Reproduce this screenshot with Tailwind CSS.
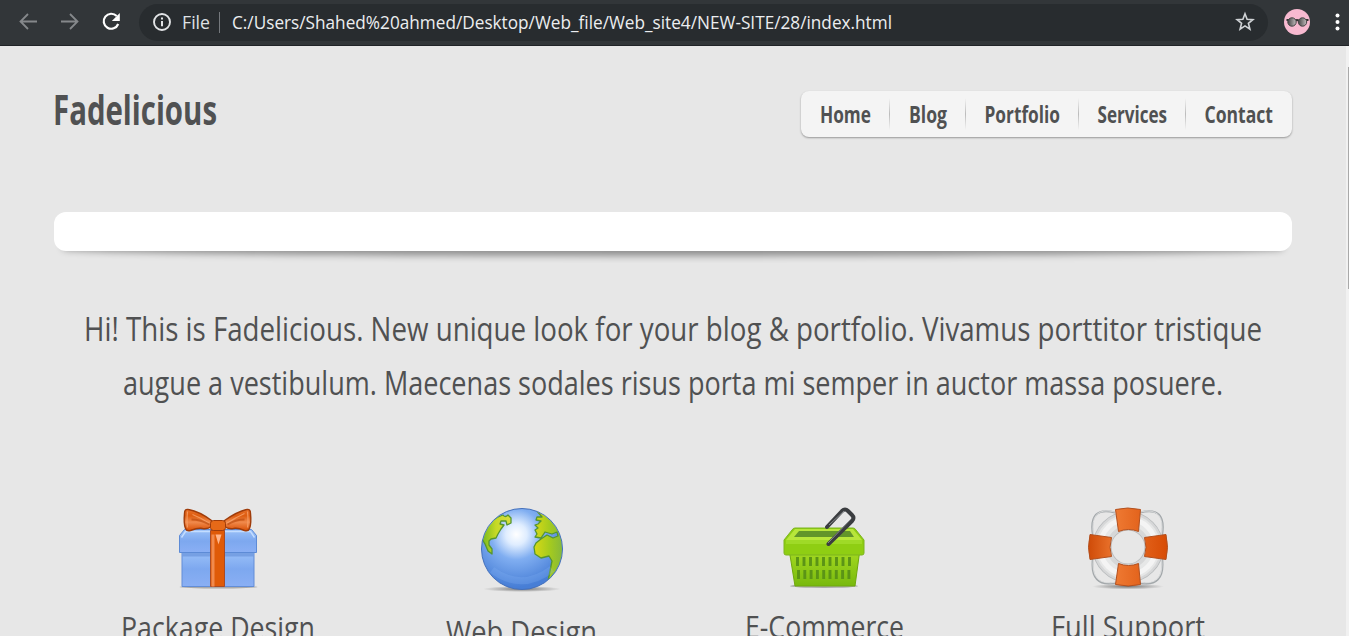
<!DOCTYPE html>
<html lang="en">
<head>
<meta charset="utf-8">
<title>Fadelicious</title>
<script src="https://cdn.jsdelivr.net/npm/@tailwindcss/browser@4"></script>
</head>
<body class="h-[636px] w-[1349px] overflow-hidden bg-[#e7e7e7] font-['Open_Sans',sans-serif] text-[#505152]">
<header class="flex h-[46px] items-center border-b border-[#202327] bg-[#323639] pb-px">
  <svg class="ml-[18px] mr-[21px] size-5 shrink-0" viewBox="0 0 20 20" fill="none" stroke="#85888b" stroke-width="1.8"><path d="M19 9.5H3M10 2L2.5 9.5 10 17"/></svg>
  <svg class="mr-[21px] size-5 shrink-0" viewBox="0 0 20 20" fill="none" stroke="#85888b" stroke-width="1.8"><path d="M2 9.5h16M11 2l7.5 7.5L11 17"/></svg>
  <svg class="mr-[17px] size-[22px] shrink-0" viewBox="0 0 22 22"><path d="M16.7 5.100A7.5 7.5 0 1 0 18.2 13" fill="none" stroke="#fff" stroke-width="2.2"/><path d="M19.8 2v8h-8z" fill="#fff"/></svg>
  <div class="flex h-[37px] w-[1129px] shrink-0 items-center rounded-full bg-[#282c2f]">
    <svg class="ml-[13px] mr-2.5 size-5 shrink-0" viewBox="0 0 20 20"><circle cx="10" cy="10" r="8" fill="none" stroke="#e2e4e6" stroke-width="1.9"/><path d="M10 9v5.3M10 5.5v2" stroke="#e2e4e6" stroke-width="2"/></svg>
    <svg class="h-8 w-[31px] shrink-0 overflow-visible" aria-label="File"><text x="0" y="23" font-size="18" fill="#dfe1e4" textLength="28" lengthAdjust="spacingAndGlyphs">File</text></svg>
    <i class="ml-[6px] mr-3 h-[21px] w-px bg-[#74787c]"></i>
    <svg class="h-8 w-[670px] shrink-0 overflow-visible"><text x="0" y="23" font-size="18" fill="#eceef0" textLength="660" lengthAdjust="spacingAndGlyphs">C:/Users/Shahed%20ahmed/Desktop/Web_file/Web_site4/NEW-SITE/28/index.html</text></svg>
    <svg class="ml-auto mr-3 size-[22px] shrink-0" viewBox="0 0 22 22"><path d="M11 2.8l2.1 5.4 5.800.4-4.5 3.7 1.5 5.8-4.9-3.2-4.9 3.2 1.5-5.8L3.1 8.6l5.800-.4z" fill="none" stroke="#d0d3d6" stroke-width="1.6"/></svg>
  </div>
  <svg class="ml-4 size-[26px] shrink-0" viewBox="0 0 26 26"><defs><linearGradient id="lens"><stop stop-color="#444"/><stop offset="1" stop-color="#c3bdbf"/></linearGradient></defs><circle cx="13" cy="13" r="13" fill="#f7b9d0"/><path d="M2.5 11h3M20.5 11h4M11 12q2-2 4 0" stroke="#333" stroke-width="1.8" fill="none"/><circle cx="8" cy="13" r="4.2" fill="url(#lens)" stroke="#444"/><circle cx="18.5" cy="13" r="4.2" fill="url(#lens)" stroke="#444"/></svg>
  <svg class="ml-[23px] h-5 w-2 shrink-0" viewBox="0 0 8 20" fill="#fff"><circle cx="4.5" cy="3.5" r="2"/><circle cx="4.5" cy="10" r="2"/><circle cx="4.5" cy="16.5" r="2"/></svg>
</header>
<div class="flex h-[590px]">
  <main class="w-[1346px] shrink-0 overflow-hidden">
    <div class="flex h-[166px] items-start justify-between pl-[54px] pr-[54px] pt-[45px]">
      <h1 class="h-11"><svg class="h-11 w-[170px] overflow-visible"><text x="-1" y="34" font-size="41" font-weight="700" fill="#505152" textLength="164" lengthAdjust="spacingAndGlyphs">Fadelicious</text></svg></h1>
      <nav class="flex h-[46px] w-[491px] items-center rounded-lg bg-[#f4f4f4] shadow-[0_1px_2px_rgba(0,0,0,0.35)]">
        <a class="w-[88px]"><svg class="h-[46px] w-full overflow-visible"><text x="19" y="31.500" font-size="23.500" font-weight="700" fill="#505152" textLength="51" lengthAdjust="spacingAndGlyphs">Home</text></svg></a>
        <i class="h-8 w-px bg-linear-to-b from-transparent via-[#bbb] to-transparent"></i>
        <a class="w-[75px]"><svg class="h-[46px] w-full overflow-visible"><text x="19" y="31.500" font-size="23.500" font-weight="700" fill="#505152" textLength="38" lengthAdjust="spacingAndGlyphs">Blog</text></svg></a>
        <i class="h-8 w-px bg-linear-to-b from-transparent via-[#bbb] to-transparent"></i>
        <a class="w-[112px]"><svg class="h-[46px] w-full overflow-visible"><text x="18.500" y="31.500" font-size="23.500" font-weight="700" fill="#505152" textLength="75.500" lengthAdjust="spacingAndGlyphs">Portfolio</text></svg></a>
        <i class="h-8 w-px bg-linear-to-b from-transparent via-[#bbb] to-transparent"></i>
        <a class="w-[106px]"><svg class="h-[46px] w-full overflow-visible"><text x="18.500" y="31.500" font-size="23.500" font-weight="700" fill="#505152" textLength="69.500" lengthAdjust="spacingAndGlyphs">Services</text></svg></a>
        <i class="h-8 w-px bg-linear-to-b from-transparent via-[#bbb] to-transparent"></i>
        <a class="w-[106px]"><svg class="h-[46px] w-full overflow-visible"><text x="18.500" y="31.500" font-size="23.500" font-weight="700" fill="#505152" textLength="68.500" lengthAdjust="spacingAndGlyphs">Contact</text></svg></a>
      </nav>
    </div>
    <section class="ml-[54px] grid h-[51px] w-[1238px] content-start overflow-hidden">
      <div class="z-10 col-start-1 row-start-1 h-[39px] rounded-xl bg-white"></div>
      <div class="col-start-1 row-start-1 mx-2.5 mt-5 h-[19px] rounded-[50%/6px] shadow-[0_4px_7px_1px_rgba(0,0,0,0.38)]"></div>
    </section>
    <section class="h-[233px] pt-[39px]">
      <svg class="h-[54px] w-full overflow-visible"><text x="84" y="39" font-size="33" font-weight="450" fill="#505152" textLength="1178" lengthAdjust="spacingAndGlyphs">Hi! This is Fadelicious. New unique look for your blog &amp; portfolio. Vivamus porttitor tristique</text></svg>
      <svg class="h-[54px] w-full overflow-visible"><text x="123" y="39" font-size="33" font-weight="450" fill="#505152" textLength="1100" lengthAdjust="spacingAndGlyphs">augue a vestibulum. Maecenas sodales risus porta mi semper in auctor massa posuere.</text></svg>
    </section>
    <section class="grid grid-cols-[repeat(4,303px)] pl-[67px] pt-2">
      <article class="flex flex-col items-center">
        <svg class="h-[100px] w-[100px]" viewBox="0.500 0.500 100 100">
          <defs><linearGradient id="box" x2="0" y2="1"><stop stop-color="#9bc1f8"/><stop offset=".5" stop-color="#7da8ef"/><stop offset="1" stop-color="#8aaff4"/></linearGradient><linearGradient id="bow" x2="0" y2="1"><stop stop-color="#e8702a"/><stop offset=".3" stop-color="#dd5c10"/><stop offset=".6" stop-color="#f08a4c"/><stop offset="1" stop-color="#d94f05"/></linearGradient></defs>
          <ellipse cx="50" cy="83.500" rx="39" ry="1.500" fill="#aaa"/>
          <path d="M13.500 48h72v35h-72z" fill="url(#box)" stroke="#628dd7"/><path d="M14 49h71v4H14z" fill="#6590d9" opacity=".65"/>
          <path d="M16 26h67l5 6v17H11V32z" fill="url(#box)" stroke="#5d8bd6"/><path d="M13 34l4-6h65l4 6" fill="none" stroke="#c4ddff" stroke-width="1.4"/>
          <path d="M42 27h14v56H42z" fill="#df5a08" stroke="#a84b26"/><path d="M43 31h3v52h-3z" fill="#f18a4d"/><path d="M47 31h6l-3 10z" fill="#ffb58b"/>
          <path d="M43 17Q31 8 20 6q-4-1-4 4-1 10 1 15 1 3 5 2 8-3 12-2 5 1 9-2zM56 17Q69 8 78 6q4-1 4 4 1 10-1 15-1 3-5 2-7-3-11-2-5 1-9-2z" fill="url(#bow)" stroke="#9f3c0a" stroke-width="1.4"/><path d="M19 8q-1 10 0 16M79 8q1 10 0 16M24 11q8 3 17 9M76 10q-9 4-18 10" fill="none" stroke="#f8a36c" stroke-width="1.2" opacity=".8"/><path d="M23 16q9 0 18 5M76 16q-9 0-17 5" fill="none" stroke="#b54408" stroke-width="2" opacity=".6"/>
          <rect x="42" y="17" width="15" height="10" rx="3" fill="#e66918" stroke="#9f3c0a"/>
        </svg>
        <h2><svg class="h-9 w-[210px] overflow-visible"><text x="7" y="35" font-size="31" font-weight="450" fill="#505152" textLength="194" lengthAdjust="spacingAndGlyphs">Package Design</text></svg></h2>
      </article>
      <article class="flex flex-col items-center">
        <svg class="h-[104px] w-[100px]" viewBox="0 0 100 104">
          <defs><radialGradient id="sea" cx=".43" cy=".32" r=".65"><stop stop-color="#fff"/><stop offset=".2" stop-color="#dfedff"/><stop offset=".48" stop-color="#80aef1"/><stop offset="1" stop-color="#477ed6"/></radialGradient><linearGradient id="land"><stop stop-color="#6fb71c"/><stop offset=".5" stop-color="#c6d926"/><stop offset="1" stop-color="#d8df3e"/></linearGradient><linearGradient id="east"><stop stop-color="#d8d916"/><stop offset=".5" stop-color="#a5cb1e"/><stop offset="1" stop-color="#7fb441"/></linearGradient><radialGradient id="shadow"><stop stop-color="#777"/><stop offset="1" stop-color="#777" stop-opacity="0"/></radialGradient><clipPath id="globe"><circle cx="50" cy="45" r="40"/></clipPath></defs>
          <ellipse cx="50" cy="85" rx="39" ry="3" fill="url(#shadow)"/>
          <circle cx="50" cy="45" r="40.500" fill="url(#sea)" stroke="#4470bb"/>
          <g clip-path="url(#globe)" stroke="#56952f" stroke-width="1.3" stroke-linejoin="round"><path fill="url(#land)" d="M9 40Q11 18 31 11q2 3 5 0l3 3v5l-4 2-1-4-5 0-1 3 4 1-3 4-3 5-2 4-5 1-2 2v4l3 4v5l-4-3-3-7-3-5z"/><path fill="url(#east)" d="M65 7l5 6-5 0-1 3 5 1-3 3-3 1 3 3-3 2 2 4-2 3 6 1 4-6 7 2 5-2 1 4-5 2-6-3-6 4-5 4-2 4 1 7 6 4 8-2 3 5-2 10-3 15 18-10V16L70 4z"/></g>
          <path d="M20 66q30 22 60-1" fill="none" stroke="#8cb9fb" stroke-width="7" opacity=".22"/>
        </svg>
        <h2><svg class="h-9 w-[210px] overflow-visible"><text x="29" y="34.500" font-size="31" font-weight="450" fill="#505152" textLength="151" lengthAdjust="spacingAndGlyphs">Web Design</text></svg></h2>
      </article>
      <article class="flex flex-col items-center">
        <svg class="h-[100px] w-[100px]" viewBox="0 1 100 100">
          <defs><linearGradient id="green" x2="0" y2="1"><stop stop-color="#a7dc22"/><stop offset="1" stop-color="#78b90e"/></linearGradient></defs>
          <ellipse cx="49" cy="83" rx="34" ry="2" fill="#aaa"/>
          <path d="M14 46h71l-5 37H20z" fill="url(#green)" stroke="#70a90d"/>
          <path d="M20 25h58q2 0 3 2l8 10v13q0 2-2 2H11q-2 0-2-2V37l8-10q1-2 3-2z" fill="#8fce13" stroke="#7db51e"/><path d="M20 26h58l9 11H11z" fill="#b8e63b"/><path d="M24 28h51l4 6H19z" fill="#62952a"/><path d="M11 37h76v4H11z" fill="#9fda27"/>
          <path d="M22.500 54v9m6.500-9v9m6.500-9v9m6.500-9v9m6.500-9v9m6.500-9v9m6.500-9v9m6.500-9v9m6.500-9v9M23.500 67v9m6.300-9v9m6.300-9v9m6.300-9v9m6.300-9v9m6.300-9v9m6.300-9v9m6.300-9v9m6.300-9v9" stroke="#5b9416" stroke-width="2.900"/>
          <path d="M52 24L67 8q3-3 6 0l4 4q3 3 0 6L53.500 41" fill="none" stroke="#3b3d40" stroke-width="4" stroke-linecap="round" stroke-linejoin="round"/><path d="M54 22L69 8M76 16L53 40" fill="none" stroke="#888c8f" stroke-width="1"/>
        </svg>
        <h2><svg class="h-9 w-[210px] overflow-visible"><text x="25" y="34" font-size="31" font-weight="450" fill="#505152" textLength="159" lengthAdjust="spacingAndGlyphs">E-Commerce</text></svg></h2>
      </article>
      <article class="flex flex-col items-center">
        <svg class="h-[100px] w-[100px]" viewBox="0 0.500 100 100">
          <defs><linearGradient id="orange"><stop stop-color="#cf4b08"/><stop offset=".35" stop-color="#ee7932"/><stop offset="1" stop-color="#d74b04"/></linearGradient></defs>
          <ellipse cx="50" cy="83" rx="36" ry="3" fill="url(#shadow)"/>
          <path d="M37 9Q10 2 15 32M62 9q27-7 22 23M15 54q-4 31 24 25M84 54q4 31-24 25" fill="none" stroke="#a3a8ab" stroke-width="2"/><path d="M37 8.500Q11 2 15.500 32M62 8.500q26-6 21.500 23.500M15.500 54q-4 30 23.500 24.500M83.500 54q4 30-23.500 24.500" fill="none" stroke="#eee" stroke-width=".7"/>
          <circle cx="50" cy="43.500" r="26" fill="none" stroke="#b8bbbd" stroke-width="19"/><circle cx="50" cy="43.500" r="26" fill="none" stroke="#d6d7d8" stroke-width="17.500"/><circle cx="50" cy="43.500" r="27" fill="none" stroke="#e6e7e7" stroke-width="11"/><circle cx="50" cy="43.500" r="28" fill="none" stroke="#f4f4f4" stroke-width="5"/>
          <g fill="url(#orange)" stroke="#b2501f" stroke-width="1"><path d="M37.500 6q12-3 25 0l-2 22q-10-4-20 0zM40.500 60q10 4 20 0l2 21q-12 3-25 0zM12 31l21.500 3q-3 10 0 19L12 56q-3-12 0-25zM88 31l-21.500 3q3 10 0 19L88 56q3-12 0-25z"/></g>
        </svg>
        <h2><svg class="h-9 w-[210px] overflow-visible"><text x="28" y="34" font-size="31" font-weight="450" fill="#505152" textLength="154" lengthAdjust="spacingAndGlyphs">Full Support</text></svg></h2>
      </article>
    </section>
  </main>
  <aside class="w-[3px] shrink-0 bg-[#f1f1f1] pl-[2px] pt-[21px]"><div class="h-[222px] bg-[#a9a9a9]"></div></aside>
</div>
</body>
</html>
